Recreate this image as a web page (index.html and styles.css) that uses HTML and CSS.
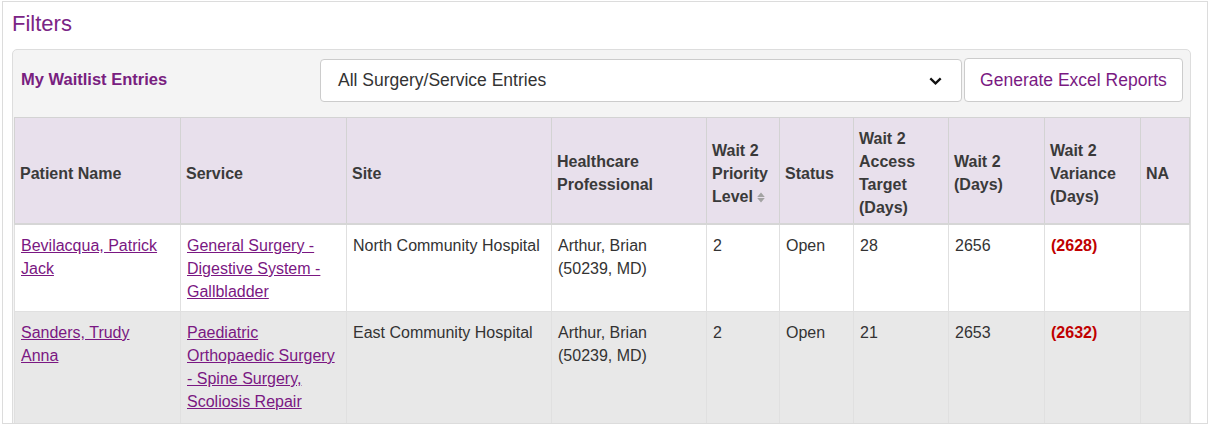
FILE: index.html
```html
<!DOCTYPE html>
<html lang="en">
<head>
<meta charset="utf-8">
<title>Filters</title>
<link rel="stylesheet" href="styles.css">
</head>
<body>
<div class="page">
  <h2 class="title">Filters</h2>
  <div class="panel">
    <div class="panel-head">
      <span class="label">My Waitlist Entries</span>
      <div class="select">
        <span>All Surgery/Service Entries</span>
        <svg class="chev" width="13" height="8" viewBox="0 0 13 8"><path d="M1.3 1.3 L6.5 6.3 L11.7 1.3" fill="none" stroke="#111" stroke-width="2.3"/></svg>
      </div>
      <button class="btn">Generate Excel Reports</button>
    </div>
    <table class="grid">
      <colgroup>
        <col class="c166"><col class="c166"><col class="c205"><col class="c155"><col class="c73"><col class="c74"><col class="c95"><col class="c96"><col class="c96"><col class="c49">
      </colgroup>
      <thead>
        <tr>
          <th>Patient Name</th>
          <th>Service</th>
          <th>Site</th>
          <th>Healthcare Professional</th>
          <th>Wait 2 Priority Level <svg class="sort" width="8" height="11" viewBox="0 0 8 11"><path d="M4 0.5 L7.8 5 L0.2 5 Z M4 10.5 L7.8 6 L0.2 6 Z" fill="#a3a3a3"/></svg></th>
          <th>Status</th>
          <th>Wait 2 Access Target (Days)</th>
          <th>Wait 2 (Days)</th>
          <th>Wait 2 Variance (Days)</th>
          <th>NA</th>
        </tr>
      </thead>
      <tbody>
        <tr>
          <td><a href="#">Bevilacqua, Patrick Jack</a></td>
          <td><a href="#">General Surgery - Digestive System - Gallbladder</a></td>
          <td>North Community Hospital</td>
          <td>Arthur, Brian (50239, MD)</td>
          <td>2</td>
          <td>Open</td>
          <td>28</td>
          <td>2656</td>
          <td class="neg">(2628)</td>
          <td></td>
        </tr>
        <tr class="alt">
          <td><a href="#">Sanders, Trudy Anna</a></td>
          <td><a href="#">Paediatric Orthopaedic Surgery - Spine Surgery, Scoliosis Repair</a></td>
          <td>East Community Hospital</td>
          <td>Arthur, Brian (50239, MD)</td>
          <td>2</td>
          <td>Open</td>
          <td>21</td>
          <td>2653</td>
          <td class="neg">(2632)</td>
          <td></td>
        </tr>
      </tbody>
    </table>
  </div>
</div>
</body>
</html>
```

FILE: styles.css
```css
body {
  margin: 0;
  font-family: "Liberation Sans", Arial, sans-serif;
  color: #333;
  background: #fff;
}

.page {
  margin: 1px 0 0 2px;
  width: 1204px;
  height: 421px;
  border: 1px solid #dcdcdc;
  overflow: hidden;
}

.title {
  margin: 0;
  padding: 9px 0 0 9px;
  font-size: 22px;
  font-weight: normal;
  line-height: 26px;
  color: #7b2586;
}

.panel {
  margin: 12px 0 0 9px;
  width: 1175px;
  padding: 0 1px;
  border: 1px solid #dddddd;
  border-radius: 5px;
  background: #f4f4f4;
}

.panel-head {
  display: flex;
  align-items: flex-start;
  height: 67px;
  box-sizing: border-box;
  padding: 9px 6px 0 7px;
}

.label {
  flex: 1;
  font-size: 16.5px;
  font-weight: bold;
  line-height: 41px;
  color: #78207f;
}

.select {
  width: 642px;
  height: 43px;
  box-sizing: border-box;
  display: flex;
  align-items: center;
  justify-content: space-between;
  padding: 0 19px 0 17px;
  background: #fff;
  border: 1px solid #cccccc;
  border-radius: 4px;
  font-size: 17.5px;
  color: #333;
}

.chev {
  display: block;
}

.btn {
  margin: -1px 0 0 2px;
  width: 219px;
  height: 44px;
  padding: 0;
  background: #fff;
  border: 1px solid #cccccc;
  border-radius: 4px;
  font-family: "Liberation Sans", Arial, sans-serif;
  font-size: 17.5px;
  color: #7a1a82;
}

.grid {
  width: 1175px;
  table-layout: fixed;
  border-collapse: collapse;
  font-size: 16px;
  line-height: 23px;
}

.c166 { width: 166px; }
.c205 { width: 205px; }
.c155 { width: 155px; }
.c73 { width: 73px; }
.c74 { width: 74px; }
.c95 { width: 95px; }
.c96 { width: 96px; }
.c49 { width: 49px; }

.grid th {
  background: #e8e0ec;
  text-align: left;
  vertical-align: middle;
  font-weight: bold;
  color: #3a3a3a;
  padding: 9px 9px 4px 5px;
  border: 1px solid #d3d3d3;
  border-bottom: 2px solid #d6d6d6;
}

.grid td {
  vertical-align: top;
  padding: 9px 10px 8px 6px;
  border: 1px solid #e0e0e0;
  color: #333;
  background: #fff;
}

.grid tr.alt td {
  background: #e8e8e8;
  padding-bottom: 14px;
}

.grid a {
  color: #7a1782;
  text-decoration: underline;
}

.grid td.neg {
  color: #c00000;
  font-weight: bold;
}

.sort {
  vertical-align: -1px;
}
```
